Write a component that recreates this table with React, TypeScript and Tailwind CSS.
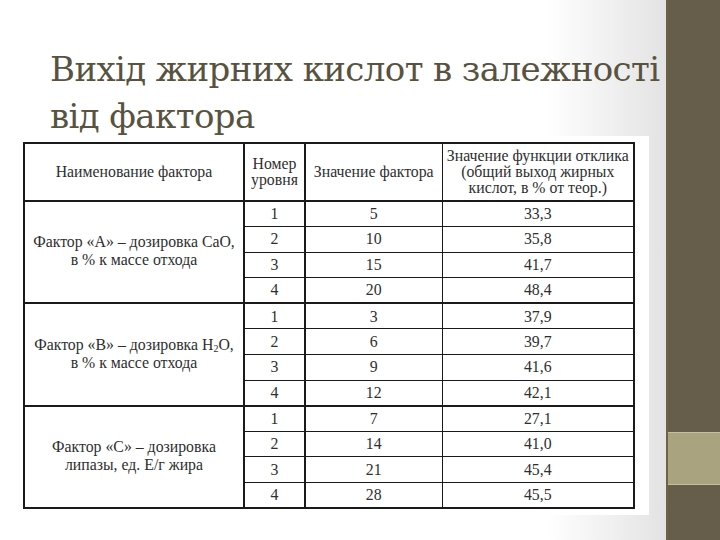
const rows = [
  {
    name: (
      <>
        Фактор «А» – дозировка СаО,
        <br />в % к массе отхода
      </>
    ),
    data: [
      ['1', '5', '33,3'],
      ['2', '10', '35,8'],
      ['3', '15', '41,7'],
      ['4', '20', '48,4'],
    ],
  },
  {
    name: (
      <>
        Фактор «В» – дозировка H<sub className="text-[10px]">2</sub>O,
        <br />в % к массе отхода
      </>
    ),
    data: [
      ['1', '3', '37,9'],
      ['2', '6', '39,7'],
      ['3', '9', '41,6'],
      ['4', '12', '42,1'],
    ],
  },
  {
    name: (
      <>
        Фактор «С» – дозировка
        <br />
        липазы, ед. Е/г жира
      </>
    ),
    data: [
      ['1', '7', '27,1'],
      ['2', '14', '41,0'],
      ['3', '21', '45,4'],
      ['4', '28', '45,5'],
    ],
  },
]

export default function App() {
  return (
    <div className="w-[720px] h-[540px] flex overflow-hidden bg-white">
      {/* slide */}
      <div className="flex-1 flex flex-col bg-[linear-gradient(to_right,#ffffff_0%,#ffffff_82%,#e3e3e3_100%)]">
        <h1 className="pl-[50px] pt-[46px] text-[34px] leading-[47px] text-[#57533f] [font-family:DejaVu_Serif,serif] tracking-[-0.6px] whitespace-nowrap">
          Вихід жирних кислот в залежності
          <br />
          від фактора
        </h1>

        {/* table picture */}
        <div className="ml-[17px] mt-[-4px] w-[632px] bg-white px-[6px] py-[6px] [font-family:Liberation_Serif,serif] text-[15.8px] text-[#2e2e2e]">
          <table className="w-[610px] border-collapse border-2 border-[#1a1a1a] table-fixed">
            <colgroup>
              <col className="w-[220px]" />
              <col className="w-[61px]" />
              <col className="w-[137px]" />
              <col className="w-[192px]" />
            </colgroup>
            <thead>
              <tr className="h-[58px] leading-[16px] text-center">
                <th className="font-normal border-r-2 border-b border-[#1a1a1a]">Наименование фактора</th>
                <th className="font-normal border-r-2 border-b border-[#1a1a1a]">
                  Номер
                  <br />
                  уровня
                </th>
                <th className="font-normal border-r border-b border-[#1a1a1a]">Значение фактора</th>
                <th className="font-normal border-b border-[#1a1a1a]">
                  Значение функции отклика
                  <br />
                  (общий выход жирных
                  <br />
                  кислот, в % от теор.)
                </th>
              </tr>
            </thead>
            <tbody>
              {rows.map((g, gi) =>
                g.data.map((r, ri) => (
                  <tr
                    key={gi + '-' + ri}
                    className={
                      'h-[25.6px] text-center leading-none ' +
                      (ri === 0 ? 'border-t-2 border-[#1a1a1a] ' : '') +
                      (ri === 1 || ri === 3 ? 'border-t-[1.5px] border-[#1a1a1a]' : 'border-t border-[#1a1a1a]')
                    }
                  >
                    {ri === 0 && (
                      <td rowSpan={4} className="border-r-2 border-[#1a1a1a] leading-[18px] align-middle pb-[2px]">
                        {g.name}
                      </td>
                    )}
                    <td className="border-r-2 border-[#1a1a1a]">{r[0]}</td>
                    <td className="border-r border-[#1a1a1a]">{r[1]}</td>
                    <td>{r[2]}</td>
                  </tr>
                ))
              )}
            </tbody>
          </table>
        </div>
        <div className="flex-1" />
      </div>

      {/* right bar */}
      <div className="w-[54px] flex flex-col border-l-2 border-[#6d6244] bg-[#665e4a]">
        <div className="h-[432px]" />
        <div className="h-[53px] bg-[#a9a37f] border-y border-[#c4bf9f]" />
        <div className="flex-1" />
      </div>
    </div>
  )
}
